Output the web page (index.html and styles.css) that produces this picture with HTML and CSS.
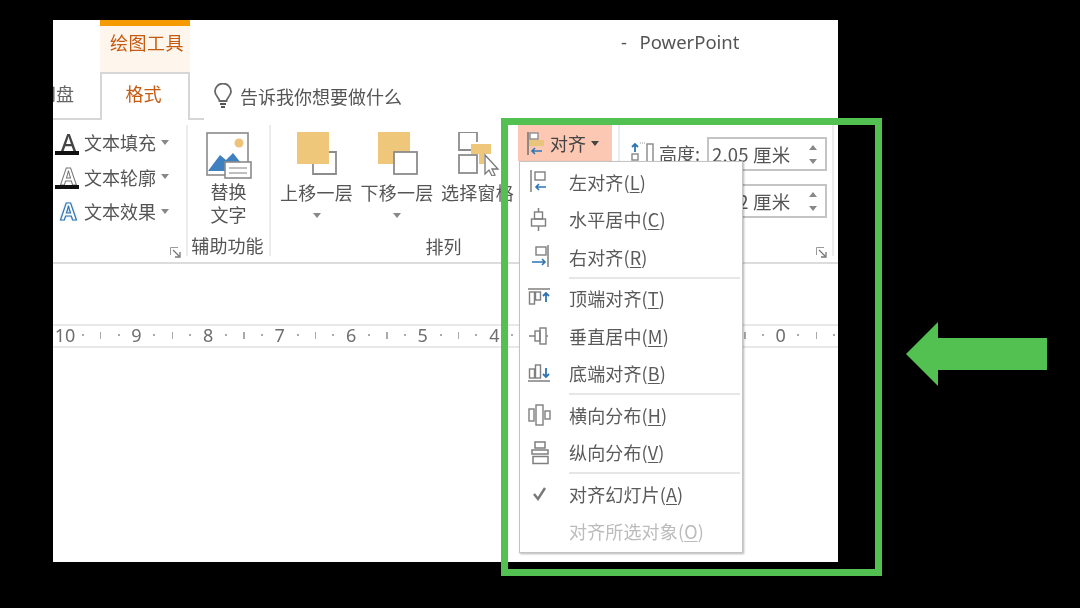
FILE: index.html
```html
<!DOCTYPE html>
<html lang="zh-CN">
<head>
<meta charset="utf-8">
<title>PowerPoint</title>
<link rel="stylesheet" href="styles.css">
</head>
<body>
<div class="stage">
  <div class="app">
    <div class="titlebar">
      <div class="context-tab">绘图工具</div>
      <div class="doc-title">-&nbsp;&nbsp;PowerPoint</div>
    </div>
    <div class="tabs">
      <div class="tab-cut">网盘</div>
      <div class="tab-active">格式</div>
      <div class="tab-stub"></div>
      <div class="tell">
        <svg class="bulb" width="20" height="26" viewBox="0 0 20 26"><path d="M6.5 18c0-3-4.500-5-4.500-9.500a8 8 0 0 1 16 0c0 4.500-4.500 6.500-4.500 9.500z" fill="none" stroke="#666" stroke-width="1.800"/><path d="M7 21h6M8 24h4" stroke="#555" stroke-width="2"/></svg>
        <span>告诉我你想要做什么</span>
      </div>
    </div>
    <div class="ribbon">
      <section class="group g-text">
        <div class="text-row"><span class="glyph-a a-fill">A</span><span>文本填充</span><i class="caret"></i></div>
        <div class="text-row"><span class="glyph-a a-line">A</span><span>文本轮廓</span><i class="caret"></i></div>
        <div class="text-row"><span class="glyph-a a-fx">A</span><span>文本效果</span><i class="caret"></i></div>
        <svg class="launcher" width="11" height="11" viewBox="0 0 11 11"><path d="M.5 8V.5H8" fill="none" stroke="#999"/><path d="M3 3l6 6M5 10h5V5" fill="none" stroke="#777" stroke-width="1.300"/></svg>
      </section>
      <section class="group g-alt">
        <svg class="alt-icon" width="47" height="47" viewBox="0 0 47 47">
          <rect x="2" y="1" width="41" height="42" fill="#fff" stroke="#8a8a8a" stroke-width="1.600"/>
          <circle cx="34" cy="11" r="4.500" fill="#eec27a"/>
          <path d="M3 39l12-16 6 5 7-7 12 15v3H3z" fill="#3f80c0"/>
          <rect x="20" y="30" width="26" height="16" fill="#fff" stroke="#8a8a8a" stroke-width="1.600"/>
          <path d="M24 36h18M24 41h18" stroke="#aaa" stroke-width="1.500"/>
        </svg>
        <div class="big-label">替换<br>文字</div>
        <div class="group-label">辅助功能</div>
      </section>
      <section class="group g-arrange">
        <div class="arrange-row">
          <div class="big-btn">
            <svg width="45" height="44" viewBox="0 0 45 44"><rect x="3" y="0" width="32" height="32" fill="#efc77b"/><path d="M35 20h7v22H19v-10" fill="none" stroke="#8c8c8c" stroke-width="1.800"/></svg>
            <div class="btn-label">上移一层</div>
            <i class="caret big-caret"></i>
          </div>
          <div class="big-btn">
            <svg width="45" height="44" viewBox="0 0 45 44"><rect x="3" y="0" width="32" height="32" fill="#efc77b"/><rect x="19" y="20" width="23" height="22" fill="#fff" stroke="#8c8c8c" stroke-width="1.800"/></svg>
            <div class="btn-label">下移一层</div>
            <i class="caret big-caret"></i>
          </div>
          <div class="big-btn">
            <svg width="45" height="44" viewBox="0 0 45 44"><path d="M17 18H4V0h18v10" fill="none" stroke="#8c8c8c" stroke-width="1.800"/><rect x="4" y="23" width="18" height="18" fill="#fff" stroke="#8c8c8c" stroke-width="1.800"/><path d="M16 12h20v10h-7v10h-5V22h-8z" fill="#efc77b"/><path d="M30 23v19l4-4 3 6 3-1-3-6h6z" fill="#fff" stroke="#777" stroke-width="1.300"/></svg>
            <div class="btn-label">选择窗格</div>
          </div>
          <div class="align-btn">
            <svg width="18" height="24" viewBox="0 0 18 24"><path d="M2 0v23" stroke="#777" stroke-width="1.600"/><rect x="4" y="1" width="8" height="6" fill="#fff" stroke="#888" stroke-width="1.300"/><rect x="3" y="8" width="15" height="6" fill="#e9c47c"/><path d="M16 19H6M9 16l-3 3 3 3" fill="none" stroke="#2e75b6" stroke-width="1.600"/></svg>
            <span>对齐</span>
            <i class="caret dark-caret"></i>
          </div>
        </div>
        <div class="group-label arrange-label">排列</div>
      </section>
      <section class="group g-size">
        <div class="size-row">
          <svg class="size-icon" width="24" height="24" viewBox="0 0 24 24"><path d="M5 10V2M2 5l3-3 3 3" fill="none" stroke="#2e75b6" stroke-width="1.800"/><rect x="2" y="12" width="6" height="6" fill="none" stroke="#888" stroke-width="1.400"/><path d="M10 1h6" stroke="#999" stroke-dasharray="1 1"/><rect x="17" y="2" width="6" height="21" fill="none" stroke="#888" stroke-width="1.400"/></svg>
          <span class="size-name">高度:</span>
          <div class="spin-box"><span class="spin-value">2.05 厘米</span><div class="spin"><i class="tri-up"></i><i class="tri-down"></i></div></div>
        </div>
        <div class="size-row">
          <svg class="size-icon" width="24" height="24" viewBox="0 0 24 24"><rect x="2" y="2" width="20" height="7" fill="none" stroke="#888" stroke-width="1.400"/></svg>
          <span class="size-name">宽度:</span>
          <div class="spin-box"><span class="spin-value">9.32 厘米</span><div class="spin"><i class="tri-up"></i><i class="tri-down"></i></div></div>
        </div>
        <svg class="launcher launcher-size" width="11" height="11" viewBox="0 0 11 11"><path d="M.5 8V.5H8" fill="none" stroke="#999"/><path d="M3 3l6 6M5 10h5V5" fill="none" stroke="#777" stroke-width="1.300"/></svg>
      </section>
    </div>
    <div class="ruler">
      <span class="num">10</span><span class="dot"></span><span class="tick"></span><span class="dot"></span>
      <span class="num">9</span><span class="dot"></span><span class="tick"></span><span class="dot"></span>
      <span class="num">8</span><span class="dot"></span><span class="tick"></span><span class="dot"></span>
      <span class="num">7</span><span class="dot"></span><span class="tick"></span><span class="dot"></span>
      <span class="num">6</span><span class="dot"></span><span class="tick"></span><span class="dot"></span>
      <span class="num">5</span><span class="dot"></span><span class="tick"></span><span class="dot"></span>
      <span class="num">4</span><span class="dot"></span><span class="tick"></span><span class="dot"></span>
      <span class="num">3</span><span class="dot"></span><span class="tick"></span><span class="dot"></span>
      <span class="num">2</span><span class="dot"></span><span class="tick"></span><span class="dot"></span>
      <span class="num">1</span><span class="dot"></span><span class="tick"></span><span class="dot"></span>
      <span class="num">0</span><span class="dot"></span><span class="tick"></span><span class="dot"></span>
    </div>
  </div>

  <div class="menu">
    <div class="item"><svg class="mi" width="24" height="26" viewBox="0 0 24 26"><path d="M3 1v22" stroke="#7f7f7f" stroke-width="1.500"/><rect x="7" y="3" width="10" height="8" fill="none" stroke="#7f7f7f" stroke-width="1.400"/><path d="M18 18H8M11 15l-3 3 3 3" fill="none" stroke="#2e75b6" stroke-width="1.600"/></svg><span>左对齐(<u>L</u>)</span></div>
    <div class="item"><svg class="mi" width="24" height="26" viewBox="0 0 24 26"><path d="M10.500 1v4M10.500 19v5" stroke="#7f7f7f" stroke-width="1.500"/><rect x="6.500" y="5" width="8" height="7" fill="none" stroke="#7f7f7f" stroke-width="1.400"/><rect x="3.500" y="12" width="14" height="7" fill="none" stroke="#7f7f7f" stroke-width="1.400"/></svg><span>水平居中(<u>C</u>)</span></div>
    <div class="item"><svg class="mi" width="24" height="26" viewBox="0 0 24 26"><path d="M20 1v22" stroke="#7f7f7f" stroke-width="1.500"/><rect x="8" y="3" width="10" height="8" fill="none" stroke="#7f7f7f" stroke-width="1.400"/><path d="M4 18h13M14 15l3 3-3 3" fill="none" stroke="#2e75b6" stroke-width="1.600"/></svg><span>右对齐(<u>R</u>)</span></div>
    <div class="sep"></div>
    <div class="item"><svg class="mi" width="24" height="26" viewBox="0 0 24 26"><path d="M0 3h22" stroke="#7f7f7f" stroke-width="1.500"/><rect x="1.500" y="6" width="5" height="12" fill="none" stroke="#7f7f7f" stroke-width="1.400"/><rect x="7.500" y="6" width="5" height="8" fill="none" stroke="#7f7f7f" stroke-width="1.400"/><path d="M18 16V7M15 10l3-3 3 3" fill="none" stroke="#2e75b6" stroke-width="1.800"/></svg><span>顶端对齐(<u>T</u>)</span></div>
    <div class="item"><svg class="mi" width="24" height="26" viewBox="0 0 24 26"><path d="M1 13h6M20 13h-2" stroke="#7f7f7f" stroke-width="1.500"/><rect x="7" y="8" width="5" height="10" fill="none" stroke="#7f7f7f" stroke-width="1.400"/><rect x="12" y="5" width="6" height="16" fill="none" stroke="#7f7f7f" stroke-width="1.400"/></svg><span>垂直居中(<u>M</u>)</span></div>
    <div class="item"><svg class="mi" width="24" height="26" viewBox="0 0 24 26"><path d="M0 20h22" stroke="#7f7f7f" stroke-width="1.500"/><rect x="1.500" y="8" width="5" height="9" fill="none" stroke="#7f7f7f" stroke-width="1.400"/><rect x="7.500" y="4" width="5" height="13" fill="none" stroke="#7f7f7f" stroke-width="1.400"/><path d="M18 7v9M15 13l3 3 3-3" fill="none" stroke="#2e75b6" stroke-width="1.800"/></svg><span>底端对齐(<u>B</u>)</span></div>
    <div class="sep"></div>
    <div class="item"><svg class="mi" width="24" height="26" viewBox="0 0 24 26"><rect x="1" y="7" width="5" height="12" fill="none" stroke="#7f7f7f" stroke-width="1.400"/><rect x="8" y="3" width="7" height="20" fill="none" stroke="#7f7f7f" stroke-width="1.400"/><rect x="17" y="9" width="5" height="8" fill="none" stroke="#7f7f7f" stroke-width="1.400"/></svg><span>横向分布(<u>H</u>)</span></div>
    <div class="item"><svg class="mi" width="24" height="26" viewBox="0 0 24 26"><rect x="7" y="2" width="10" height="6" fill="none" stroke="#7f7f7f" stroke-width="1.500"/><rect x="4" y="10" width="16" height="4" fill="none" stroke="#7f7f7f" stroke-width="1.500"/><rect x="5" y="16.500" width="15" height="7" fill="none" stroke="#7f7f7f" stroke-width="1.500"/></svg><span>纵向分布(<u>V</u>)</span></div>
    <div class="sep"></div>
    <div class="item"><svg class="mi" width="24" height="26" viewBox="0 0 24 26"><path d="M6 13l4 5 7-11" fill="none" stroke="#777" stroke-width="2.400"/></svg><span>对齐幻灯片(<u>A</u>)</span></div>
    <div class="item off"><svg class="mi" width="24" height="26" viewBox="0 0 24 26"></svg><span>对齐所选对象(<u>O</u>)</span></div>
  </div>

  <div class="frame"></div>
  <svg class="arrow" width="141" height="64" viewBox="0 0 141 64"><path d="M0 32L32 0v16h109v32H32v16z" fill="#52c152"/></svg>
</div>
</body>
</html>
```
FILE: styles.css
```css
* { box-sizing: border-box; }
html, body { margin: 0; padding: 0; background: #000; }
body { font-family: "Noto Sans CJK SC", "Noto Sans", sans-serif; color: #555; font-size: 18px; }
i { display: block; }
svg { display: block; flex: none; }

.stage { position: relative; width: 1080px; height: 608px; overflow: hidden; padding: 20px 0 0 53px; background: #000; filter: blur(.5px); }
.app { width: 785px; height: 542px; background: #fff; overflow: hidden; }

.titlebar { display: flex; height: 52px; }
.context-tab { width: 90px; margin-left: 47px; padding-left: 4px; background: #fef6ec; border-top: 6px solid #f59a00; color: #c55a11; line-height: 32px; text-align: center; letter-spacing: .5px; }
.doc-title { margin-left: 431px; line-height: 44px; font-size: 18.500px; word-spacing: 1.500px; font-family: "Noto Sans", sans-serif; color: #555; }

.tabs { display: flex; height: 48px; }
.tab-cut { width: 47px; display: flex; justify-content: flex-end; padding-right: 26px; overflow: hidden; white-space: nowrap; border-bottom: 2px solid #d6d6d6; line-height: 42px; color: #666; }
.tab-active { width: 90px; padding-right: 3px; border: 2px solid #d6d6d6; border-bottom: 0; text-align: center; color: #c55a11; line-height: 38px; }
.tab-stub { width: 14px; border-bottom: 2px solid #d6d6d6; }
.tell { display: flex; align-items: center; margin-left: 9px; gap: 7px; height: 48px; }
.tell span { line-height: 46px; }

.ribbon { display: flex; height: 144px; padding-top: 5px; border-bottom: 2px solid #dcdcdc; padding-bottom: 6px; }
.group { display: flex; flex-direction: column; border-right: 2px solid #ececec; }
.g-text { width: 135px; }
.text-row { display: flex; align-items: center; height: 34.500px; }
.glyph-a { width: 31px; text-align: center; font-size: 23px; font-weight: 500; line-height: 27px; font-family: "Noto Sans", sans-serif; color: #444; position: relative; }
.a-fill::after, .a-line::after { content: ""; position: absolute; left: 2px; width: 24px; top: 22px; height: 4px; background: #111; }
.a-line { color: #fff; -webkit-text-stroke: 1px #777; font-weight: 700; }
.a-fx { color: #fff; font-weight: 700; -webkit-text-stroke: 1.200px #2e75b6; text-shadow: 0 0 3px #9cc3e8; }
.caret { width: 0; height: 0; border: 4.500px solid transparent; border-top: 5px solid #888; border-bottom: 0; margin-left: 5px; }
.launcher { margin-top: auto; margin-bottom: -2px; align-self: flex-end; margin-right: 5px; }

.g-alt { width: 83px; align-items: center; }
.alt-icon { margin-top: 7px; }
.big-label { margin-top: 1px; line-height: 23px; text-align: center; color: #555; }
.group-label { margin-top: auto; line-height: 22px; height: 22px; color: #555; text-align: center; padding-right: 2px; letter-spacing: .1px; }

.g-arrange { width: 349px; }
.arrange-row { display: flex; gap: 7.500px; padding-left: 9px; align-items: flex-start; }
.big-btn { width: 73px; display: flex; flex-direction: column; align-items: center; white-space: nowrap; padding-top: 7px; }
.btn-label { margin-top: 4px; line-height: 24px; letter-spacing: .2px; }
.big-caret { margin: 9px 0 0; }
.align-btn { display: flex; align-items: center; width: 94px; height: 36px; margin-left: -3.500px; background: #fcc8b3; padding-left: 8px; color: #444; }
.align-btn svg { margin-top: 1px; }
.align-btn span { margin-left: 6px; line-height: 34px; }
.dark-caret { border-top-color: #444; margin-left: 5px; }
.arrange-label { margin-top: auto; position: relative; top: 1px; }

.g-size { width: 214px; padding: 12px 0 0 10px; }
.size-row { display: flex; align-items: center; height: 34px; margin-bottom: 13px; }
.size-name { width: 44px; margin: 0 0 3px 5px; line-height: 30px; color: #555; white-space: nowrap; }
.spin-box { display: flex; align-items: center; justify-content: space-between; width: 120px; height: 34px; margin-left: 4px; border: 2px solid #c4c4c4; padding: 0 8px 0 3px; }
.spin-value { font-size: 18.500px; white-space: nowrap; color: #555; letter-spacing: .2px; }
.spin { display: flex; flex-direction: column; gap: 9px; }
.tri-up, .tri-down { width: 0; height: 0; border: 4.500px solid transparent; border-top: 0; border-bottom: 5px solid #888; }
.tri-down { border-bottom: 0; border-top: 5px solid #888; }
.launcher-size { margin-right: 5px; }

.ruler { display: flex; height: 24px; margin-top: 60px; padding: 0 0 2px 3px; border-top: 2px solid #e8e8e8; border-bottom: 2px solid #e8e8e8; align-items: center; white-space: nowrap; width: 785px; overflow: hidden; }
.num, .dot, .tick { flex: none; width: 17.900px; text-align: center; display: flex; justify-content: center; align-items: center; }
.num { font-family: "Noto Sans", sans-serif; font-size: 18px; color: #6e6e6e; line-height: 20px; }
.dot::before { content: ""; width: 2px; height: 2px; background: #aaa; }
.tick::before { content: ""; width: 1.500px; height: 7px; background: #aaa; }

.menu { position: absolute; left: 519px; top: 161px; width: 224px; height: 392px; background: #fff; border: 1px solid #c4c4c4; box-shadow: 1px 1px 2px rgba(0,0,0,.3); padding-top: 1px; }
.item { display: flex; align-items: center; height: 37.500px; padding-left: 8px; color: #5a5a5a; white-space: nowrap; }
.item svg { margin-top: 1px; }
.item span { margin-left: 17px; letter-spacing: .15px; }
.item u { text-underline-offset: 2px; }
.off { color: #bcbcbc; }
.sep { height: 2px; margin: 1px 2px 1px 49px; background: #e6e6e6; }

.frame { position: absolute; left: 501px; top: 118px; width: 381px; height: 458px; border: 7px solid #52c152; }
.arrow { position: absolute; left: 906px; top: 322px; }
```
